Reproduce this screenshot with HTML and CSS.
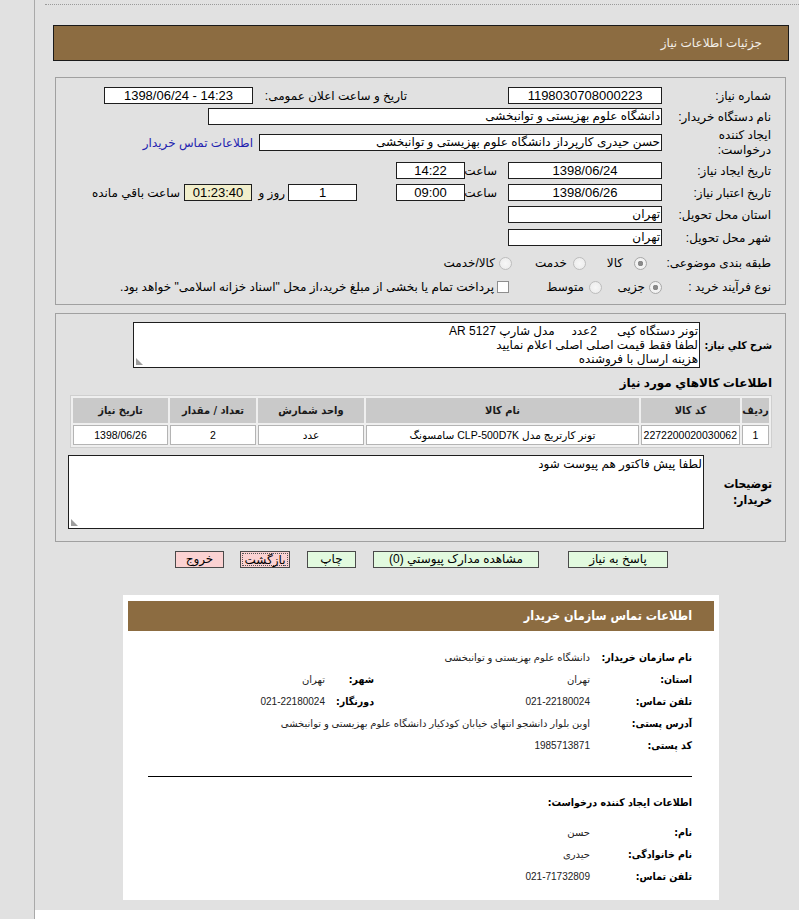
FILE: index.html
```html
<!DOCTYPE html>
<html lang="fa">
<head>
<meta charset="utf-8">
<title>جزئیات اطلاعات نیاز</title>
<link rel="stylesheet" href="styles.css">
</head>
<body>
<div class="frame">
  <div class="dots"></div>
  <div class="titlebar">جزئیات اطلاعات نیاز</div>

  <div class="panel p1">
    <div class="row r1">
      <div class="lbl">شماره نیاز:</div>
      <div class="box w154 c">1198030708000223</div>
      <div class="ann">تاریخ و ساعت اعلان عمومی:</div>
      <div class="box w149 c ltr">1398/06/24 - 14:23</div>
    </div>
    <div class="row r2">
      <div class="lbl">نام دستگاه خریدار:</div>
      <div class="box w454">دانشگاه علوم بهزیستی و توانبخشی</div>
    </div>
    <div class="row r3">
      <div class="lbl two">ایجاد کننده<br>درخواست:</div>
      <div class="box w403">حسن حیدری کارپرداز دانشگاه علوم بهزیستی و توانبخشی</div>
      <a class="link">اطلاعات تماس خریدار</a>
    </div>
    <div class="row r4">
      <div class="lbl">تاریخ ایجاد نیاز:</div>
      <div class="box w154 c">1398/06/24</div>
      <div class="sa">ساعت</div>
      <div class="box w69 c">14:22</div>
    </div>
    <div class="row r5">
      <div class="lbl">تاریخ اعتبار نیاز:</div>
      <div class="box w154 c">1398/06/26</div>
      <div class="sa">ساعت</div>
      <div class="box w69 c">09:00</div>
      <div class="box w69 c days">1</div>
      <div class="roz">روز و</div>
      <div class="box w68 c yellow">01:23:40</div>
      <div class="remain">ساعت باقي مانده</div>
    </div>
    <div class="row r6">
      <div class="lbl">استان محل تحویل:</div>
      <div class="box w154">تهران</div>
    </div>
    <div class="row r7">
      <div class="lbl">شهر محل تحویل:</div>
      <div class="box w154">تهران</div>
    </div>
    <div class="row r8">
      <div class="lbl lbl8">طبقه بندی موضوعی:</div>
      <div class="opt o81"><span class="radio on"></span><span>کالا</span></div>
      <div class="opt o82"><span class="radio"></span><span>خدمت</span></div>
      <div class="opt o83"><span class="radio"></span><span>کالا/خدمت</span></div>
    </div>
    <div class="row r9">
      <div class="lbl">نوع فرآیند خرید :</div>
      <div class="opt o91"><span class="radio on"></span><span>جزیی</span></div>
      <div class="opt o92"><span class="radio"></span><span>متوسط</span></div>
      <span class="check"></span>
      <span class="checktext">پرداخت تمام یا بخشی از مبلغ خرید،از محل "اسناد خزانه اسلامی" خواهد بود.</span>
    </div>
  </div>

  <div class="panel p2">
    <div class="drow">
      <div class="dlbl one">شرح کلي نياز:</div>
      <div class="ta">
        <textarea class="desc" readonly>تونر دستگاه کپی      2عدد     مدل شارپ AR 5127
لطفا فقط قیمت اصلی اصلی اعلام نمایید
هزینه ارسال با فروشنده</textarea>
      </div>
    </div>
    <div class="h-goods">اطلاعات کالاهاي مورد نياز</div>
    <table class="goods">
      <colgroup>
        <col class="c1"><col class="c2"><col class="c3"><col class="c4"><col class="c5"><col class="c6">
      </colgroup>
      <thead>
        <tr><th>ردیف</th><th>کد کالا</th><th>نام کالا</th><th>واحد شمارش</th><th>تعداد / مقدار</th><th>تاریخ نیاز</th></tr>
      </thead>
      <tbody>
        <tr><td>1</td><td>2272200020030062</td><td>تونر کارتریج مدل CLP-500D7K سامسونگ</td><td>عدد</td><td>2</td><td>1398/06/26</td></tr>
      </tbody>
    </table>
    <div class="drow nrow">
      <div class="dlbl">توضیحات<br>خریدار:</div>
      <div class="ta">
        <textarea class="notes" readonly>لطفا پیش فاکتور هم پیوست شود</textarea>
      </div>
    </div>
  </div>

  <div class="btns">
    <div class="btn green b1">پاسخ به نیاز</div>
    <div class="btn green b2">مشاهده مدارک پیوستي (0)</div>
    <div class="btn green b3">چاپ</div>
    <div class="btn pink b4"><span class="focus">بازگشت</span></div>
    <div class="btn pink b5">خروج</div>
  </div>

  <div class="contact">
    <div class="chead">اطلاعات تماس سازمان خریدار</div>
    <div class="cbody">
      <div class="crow">
        <div class="cl">نام سازمان خریدار:</div>
        <div class="cv wide">دانشگاه علوم بهزیستی و توانبخشی</div>
      </div>
      <div class="crow">
        <div class="cl">استان:</div>
        <div class="cv">تهران</div>
        <div class="cl cl2">شهر:</div>
        <div class="cv">تهران</div>
      </div>
      <div class="crow">
        <div class="cl">تلفن تماس:</div>
        <div class="cv">021-22180024</div>
        <div class="cl cl2">دورنگار:</div>
        <div class="cv">021-22180024</div>
      </div>
      <div class="crow">
        <div class="cl">آدرس پستی:</div>
        <div class="cv wide">اوین بلوار دانشجو انتهای خیابان کودکیار دانشگاه علوم بهزیستی و توانبخشی</div>
      </div>
      <div class="crow">
        <div class="cl">کد پستی:</div>
        <div class="cv">1985713871</div>
      </div>
      <div class="rule"></div>
      <div class="crow sub">
        <div class="cl wide">اطلاعات ایجاد کننده درخواست:</div>
      </div>
      <div class="crow first2">
        <div class="cl">نام:</div>
        <div class="cv">حسن</div>
      </div>
      <div class="crow">
        <div class="cl">نام خانوادگی:</div>
        <div class="cv">حیدری</div>
      </div>
      <div class="crow">
        <div class="cl">تلفن تماس:</div>
        <div class="cv">021-71732809</div>
      </div>
    </div>
  </div>
  <div class="foot"></div>
</div>
</body>
</html>
```

FILE: styles.css
```css
* { box-sizing: border-box; }
html, body { margin: 0; padding: 0; }
body {
  background: #e1e1e1;
  width: 799px;
  height: 919px;
  overflow: hidden;
  font-family: "Liberation Sans", "DejaVu Sans", sans-serif;
  font-size: 12px;
  color: #000;
}
.frame {
  margin-left: 34px;
  border-left: 1px solid #a9a9a9;
  height: 919px;
  display: flex;
  flex-direction: column;
  align-items: flex-start;
}
.dots {
  margin: 4px 0 0 10px;
  width: 754px;
  border-top: 1px dotted #9a9a9a;
}
.titlebar {
  margin: 20px 0 0 18px;
  width: 736px;
  height: 36px;
  background: #8c6c41;
  border: 1px solid #1a1a1a;
  color: #f3efe8;
  direction: rtl;
  padding-right: 26px;
  line-height: 34px;
  font-size: 12px;
}
.panel {
  margin-left: 20px;
  width: 731px;
  border: 1px solid #a0a0a0;
  direction: rtl;
}
.p1 { margin-top: 16px; height: 228px; padding: 7px 14px 0 0; }
.row { display: flex; align-items: center; height: 21px; white-space: nowrap; }
.r3 { height: 31px; }
.r4 { height: 25px; }
.r5 { height: 19px; }
.r6 { height: 25px; }
.r8 { height: 30px; }
.r9 { height: 18px; }
.lbl { width: 109px; flex: none; }
.lbl.two { line-height: 15px; white-space: normal; }
.lbl8 { width: 124px; }
.box {
  flex: none;
  height: 17px;
  border: 1px solid #1e1e1e;
  background: #fff;
  line-height: 15px;
  padding: 0 1px;
  white-space: nowrap;
  overflow: hidden;
}
.c { text-align: center; font-size: 13px; }
.ltr { direction: ltr; }
.w154 { width: 154px; }
.w149 { width: 149px; }
.w454 { width: 454px; }
.w403 { width: 403px; }
.w69 { width: 69px; }
.w68 { width: 68px; }
.ann { width: 154px; flex: none; margin-right: 101px; }
.link { margin-right: 6px; color: #2323b0; cursor: pointer; }
.sa { width: 43px; flex: none; padding-right: 11px; }
.days { margin-right: 39px; }
.roz { width: 36px; flex: none; padding-right: 3px; }
.yellow { background: #f1eecb; }
.remain { margin-right: 4px; }
.opt { display: flex; align-items: center; flex: none; }
.radio {
  width: 13px;
  height: 13px;
  flex: none;
  border-radius: 50%;
  border: 1px solid #bdbdbd;
  background: radial-gradient(circle, #f7f7f7 0, #e9e9e9 100%);
}
.radio.on {
  background: radial-gradient(circle, #8a8a8a 0, #8a8a8a 2.5px, #f4f4f4 3px, #ececec 100%);
  border-color: #a8a8a8;
}
.o81 { width: 61px; }
.o81 .radio { margin-left: 11px; }
.o82 { width: 74px; }
.o82 .radio { margin-left: 6px; }
.o83 .radio { margin-left: 4px; }
.o91 { width: 60px; }
.o91 .radio { margin-left: 4px; }
.o92 { width: 93px; }
.o92 .radio { margin-left: 5px; }
.check {
  width: 12px;
  height: 12px;
  flex: none;
  border: 1px solid #8e8e8e;
  background: #fff;
}
.checktext { margin-right: 3px; }

.p2 { margin-top: 8px; height: 229px; padding: 8px 13px 0 0; }
.drow { display: flex; align-items: center; }
.dlbl {
  width: 68px;
  flex: none;
  font-family: "DejaVu Sans Condensed", "Liberation Sans", "DejaVu Sans", sans-serif;
  font-stretch: condensed;
  font-weight: bold;
  font-size: 12px;
  line-height: 16px;
}
.dlbl.one { width: 72px; white-space: nowrap; font-size: 10.5px; }
.ta { position: relative; flex: none; }
.ta::after {
  content: "";
  position: absolute;
  left: 3px;
  bottom: 3px;
  width: 7px;
  height: 7px;
  background:
    radial-gradient(circle, #9a9a9a 0.7px, transparent 0.9px) 0 0 / 2px 2px;
  clip-path: polygon(0 0, 0 100%, 100% 100%);
}
textarea {
  display: block;
  direction: rtl;
  font-family: "Liberation Sans", "DejaVu Sans", sans-serif;
  font-size: 12px;
  line-height: 14px;
  color: #000;
  background: #fff;
  border: 1px solid #1e1e1e;
  padding: 1px 1px;
  margin: 0;
  overflow: hidden;
  resize: none;
}
.desc { width: 567px; height: 46px; }
.h-goods { margin-top: 7px; height: 16px; line-height: 16px; font-weight: bold; }
.goods {
  margin-top: 4px;
  width: 702px;
  table-layout: fixed;
  border-collapse: separate;
  border-spacing: 2px;
  border: 1px solid #cfcfcf;
  background: #efefef;
  font-size: 10px;
}
.c1 { width: 27px; }
.c2 { width: 99px; }
.c3 { width: 273px; }
.c4 { width: 106px; }
.c5 { width: 86px; }
.c6 { width: 95px; }
.goods th {
  height: 25px;
  background: #c9c9c9;
  font-family: "DejaVu Sans Condensed", "Liberation Sans", "DejaVu Sans", sans-serif;
  font-stretch: condensed;
  font-weight: bold;
  font-size: 11px;
  color: #1a1a1a;
  padding: 0;
  text-align: center;
}
.goods td {
  height: 20px;
  background: #fff;
  border: 1px solid #b4b4b4;
  padding: 0 2px;
  text-align: center;
  white-space: nowrap;
  font-size: 10.5px;
}
.nrow { margin-top: 7px; }
.notes { width: 636px; height: 74px; }

.btns {
  margin-top: 9px;
  width: 764px;
  display: flex;
  direction: rtl;
  padding-right: 131px;
}
.btn {
  flex: none;
  height: 17px;
  border: 1px solid #4a4a4a;
  line-height: 15px;
  text-align: center;
  font-size: 12px;
}
.green { background: #e2fadf; }
.pink { background: #fbd2d2; }
.b1 { width: 100px; }
.b2 { width: 166px; margin-right: 29px; }
.b3 { width: 49px; margin-right: 17px; }
.b4 { width: 50px; margin-right: 17px; padding-top: 1px; }
.b5 { width: 49px; margin-right: 16px; }
.focus { display: block; margin: 0 1px; height: 13px; line-height: 12px; border: 1px dotted #555; }

.contact {
  margin: 27px 0 0 88px;
  width: 596px;
  height: 305px;
  background: #fff;
  padding: 6px 5px 0;
  direction: rtl;
}
.chead {
  height: 30px;
  background: #8c6c41;
  color: #fff;
  font-family: "DejaVu Sans Condensed", "Liberation Sans", "DejaVu Sans", sans-serif;
  font-stretch: condensed;
  font-weight: bold;
  font-size: 12.5px;
  line-height: 30px;
  padding-right: 22px;
}
.cbody { padding: 15px 22px 0 0; }
.crow { display: flex; align-items: center; height: 22px; white-space: nowrap; }
.cl {
  width: 102px;
  flex: none;
  font-family: "DejaVu Sans Condensed", "Liberation Sans", "DejaVu Sans", sans-serif;
  font-stretch: condensed;
  font-weight: bold;
  font-size: 10.5px;
}
.cl2 { width: 49px; }
.cv { width: 216px; flex: none; font-size: 10px; color: #222; }
.cv.wide, .cl.wide { width: auto; }
.rule { margin: 20px 0 0 20px; width: 544px; height: 1px; background: #000; }
.sub { margin-top: 14px; }
.first2 { margin-top: 8px; }
.foot { margin-top: auto; width: 764px; height: 9px; background: #fff; }
```
